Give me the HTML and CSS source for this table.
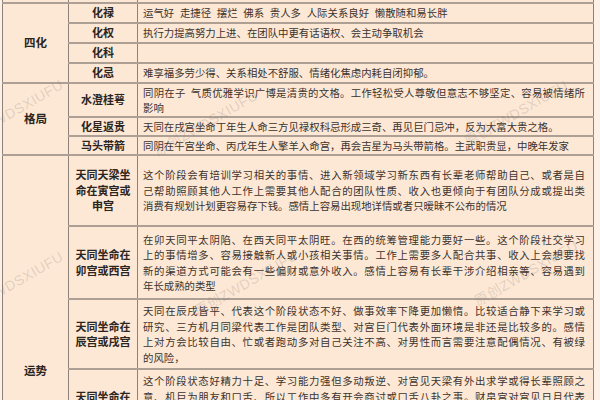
FILE: index.html
```html
<!DOCTYPE html>
<html lang="zh-CN">
<head>
<meta charset="utf-8">
<title>天同星</title>
<link rel="stylesheet" href="styles.css">
</head>
<body>
<div class="page">
<table class="grid">
<colgroup><col class="c1"><col class="c2"><col class="c3"></colgroup>
<tr class="stub"><td></td><td></td><td></td></tr>
<tr class="h20"><td rowspan="4" class="sec">四化</td><td class="lab">化禄</td><td class="txt spaced">运气好 走捷径 摆烂 佛系 贵人多 人际关系良好 懒散随和易长胖</td></tr>
<tr class="h20"><td class="lab">化权</td><td class="txt">执行力提高努力上进、在团队中更有话语权、会主动争取机会</td></tr>
<tr class="h20"><td class="lab">化科</td><td class="txt"></td></tr>
<tr class="h20"><td class="lab">化忌</td><td class="txt">难享福多劳少得、关系相处不舒服、情绪化焦虑内耗自闭抑郁。</td></tr>
<tr class="h34"><td rowspan="3" class="sec">格局</td><td class="lab">水澄桂萼</td><td class="txt"><span class="ln full">同阴在子&nbsp; 气质优雅学识广博是清贵的文格。工作轻松受人尊敬但意志不够坚定、容易被情绪所</span><span class="ln">影响</span></td></tr>
<tr class="h19"><td class="lab">化星返贵</td><td class="txt"><span class="ln">天同在戌宫坐命丁年生人命三方见禄权科忌形成三奇、再见巨门忌冲，反为大富大贵之格。</span></td></tr>
<tr class="h19"><td class="lab">马头带箭</td><td class="txt"><span class="ln">同阴在午宫坐命、丙戊年生人擎羊入命宫，再会吉星为马头带箭格。主武职贵显，中晚年发家</span></td></tr>
<tr class="h71"><td rowspan="6" class="sec">运势</td><td class="lab">天同天梁坐<br>命在寅宫或<br>申宫</td><td class="txt"><span class="ln full">这个阶段会有培训学习相关的事情、进入新领域学习新东西有长辈老师帮助自己、或者是自</span><span class="ln full">己帮助照顾其他人工作上需要其他人配合的团队性质、收入也更倾向于有团队分成或提出类</span><span class="ln">消费有规划计划更容易存下钱。感情上容易出现地详情或者只暧昧不公布的情况</span></td></tr>
<tr class="h73"><td class="lab">天同坐命在<br>卯宫或西宫</td><td class="txt"><span class="ln full">在卯天同平太阴陷、在西天同平太阴旺。在西的统筹管理能力要好一些。这个阶段社交学习</span><span class="ln full">上的事情增多、容易接触新人或小孩相关事情。工作上需要多人配合共事、收入上会想要找</span><span class="ln full">新的渠道方式可能会有一些偏财或意外收入。感情上容易有长辈干涉介绍相亲等、容易遇到</span><span class="ln">年长成熟的类型</span></td></tr>
<tr class="h70"><td class="lab">天同坐命在<br>辰宫或戌宫</td><td class="txt"><span class="ln full">天同在辰戌皆平、代表这个阶段状态不好、做事效率下降更加懒惰。比较适合静下来学习或</span><span class="ln full">研究、三方机月同梁代表工作是团队类型、对宫巨门代表外面环境是非还是比较多的。感情</span><span class="ln full">上对方会比较自由、忙或者跑动多对自己关注不高、对男性而言需要注意配偶情况、有被绿</span><span class="ln">的风险，</span></td></tr>
<tr class="h70"><td class="lab">天同坐命在<br>巳宫或亥宫</td><td class="txt"><span class="ln full">这个阶段状态好精力十足、学习能力强但多动叛逆、对宫见天梁有外出求学或得长辈照顾之</span><span class="ln full">意、机巨为朋友和口舌、所以工作中多有开会商讨或口舌八卦之事。财帛宫对宫见日月代表</span><span class="ln full">收入稳定、感情上容易遇到比自己年长或有照顾之意的对象、相处中需要注意沟通方式与相</span><span class="ln">处节奏</span></td></tr>
<tr class="h70"><td class="lab">天同坐命在<br>午宫或子宫</td><td class="txt"><span class="ln">这个阶段容易有情绪起伏、工作上需要与人合作、收入平稳、感情上注意沟通。</span></td></tr>
<tr class="h78"><td class="lab">天同坐命在<br>未宫或丑宫</td><td class="txt"><span class="ln">这个阶段适合稳中求进、多学习积累、工作与收入逐步提升、感情上顺其自然。</span></td></tr>
</table>
<div class="marks" aria-hidden="true">
<span class="wm m1">ZWDSXIUFU</span>
<span class="wm m2">原创ZWDSXIUFU</span>
<span class="wm m3">原创ZWDSXIUFU</span>
<span class="wm m4">ZWDSXIUFU</span>
<span class="wm m5">原创ZWDSXIUFU</span>
<span class="wm m6">原创ZWDSXIUFU</span>
</div>
</div>
</body>
</html>
```

FILE: styles.css
```css
html, body {
  margin: 0;
  padding: 0;
}
body {
  background: #fdf1e7;
  width: 600px;
  height: 400px;
  overflow: hidden;
  font-family: "Noto Sans CJK SC", "Noto Sans", sans-serif;
  color: #3b332d;
}
.page {
  position: relative;
  width: 600px;
  height: 400px;
  overflow: hidden;
}
.grid {
  margin-left: 2px;
  border-collapse: collapse;
  table-layout: fixed;
  width: 591px;
  background: #fde8d6;
}
.c1 { width: 66px; }
.c2 { width: 69px; }
.c3 { width: 456px; }
.grid td {
  border-top: 2px solid #ad9f93;
  border-bottom: 2px solid #ad9f93;
  border-left: 1px solid #8e8177;
  border-right: 1px solid #8e8177;
  padding: 0;
  font-size: 11px;
  line-height: 15.5px;
  vertical-align: middle;
  overflow: hidden;
}
.stub td {
  border-top: none;
  height: 2px;
}
.h20 td { height: 18px; }
.h34 td { height: 32px; }
.h19 td { height: 17px; }
.h71 td { height: 69px; }
.h73 td { height: 71px; }
.h70 td { height: 68px; }
.h78 td { height: 76px; }
.grid td.sec {
  text-align: center;
  font-weight: 700;
  font-size: 11.5px;
  color: #2b2521;
}
.grid td.lab {
  text-align: center;
  font-weight: 700;
  font-size: 11px;
  color: #2b2521;
}
.grid td.txt {
  padding: 0 8px 0 5px;
  font-size: 10.4px;
  white-space: nowrap;
  color: #3b332d;
}
.spaced {
  word-spacing: 3.4px;
}
.ln {
  display: block;
  white-space: nowrap;
}
.ln.full {
  text-align: justify;
  text-align-last: justify;
  text-justify: inter-character;
}
.marks {
  position: absolute;
  inset: 0;
  pointer-events: none;
}
.wm {
  position: absolute;
  font-family: "Liberation Sans", "Noto Sans CJK SC", sans-serif;
  font-size: 14px;
  color: rgba(140, 125, 115, 0.24);
  transform: rotate(-30deg);
  transform-origin: left bottom;
  white-space: nowrap;
  letter-spacing: 0.5px;
}
.m1 { left: -10px; top: 118px; }
.m2 { left: 160px; top: 140px; }
.m3 { left: 470px; top: 130px; }
.m4 { left: -10px; top: 290px; }
.m5 { left: 200px; top: 300px; }
.m6 { left: 480px; top: 290px; }
```
